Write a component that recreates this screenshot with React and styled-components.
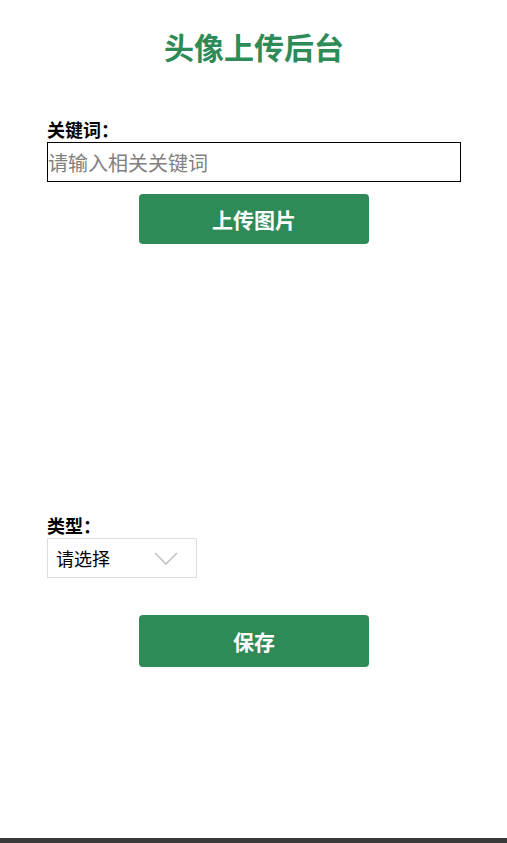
import { createGlobalStyle, styled } from "styled-components";
import { useState } from "react";

const GlobalStyle = createGlobalStyle`
    html, body {
        margin: 0;
        padding: 0;
        background: #ffffff;
    }
    * {
        box-sizing: border-box;
    }
    body {
        font-family: "Noto Sans CJK SC", "Noto Sans", sans-serif;
    }
`

export default function App() {
    const [keyword, setKeyword] = useState("");
    const [tipo, setTipo] = useState("");

    return (
        <Page>
            <GlobalStyle />
            <Main>
                <Title>头像上传后台</Title>

                <Field>
                    <Label>关键词：</Label>
                    <KeywordInput
                        value={keyword}
                        onChange={e => setKeyword(e.target.value)}
                        placeholder="请输入相关关键词"
                    />
                </Field>

                <ActionButton type="button" $height={50} $top={12}>上传图片</ActionButton>

                <Preview />

                <Field>
                    <Label>类型：</Label>
                    <SelectBox>
                        <select value={tipo} onChange={e => setTipo(e.target.value)}>
                            <option value="">请选择</option>
                            <option value="boy">男生头像</option>
                            <option value="girl">女生头像</option>
                            <option value="cartoon">卡通头像</option>
                        </select>
                        <Chevron width="24" height="14" viewBox="0 0 24 14">
                            <path d="M1 1 L12 12 L23 1" fill="none" stroke="#c4c4c4" strokeWidth="1.6" />
                        </Chevron>
                    </SelectBox>
                </Field>

                <ActionButton type="button" $height={52} $top={37}>保存</ActionButton>
            </Main>
            <BottomBar />
        </Page>
    );
}

const Page = styled.div`
    min-height: 100vh;
    display: flex;
    flex-direction: column;
`

const Main = styled.div`
    flex: 1;
    display: flex;
    flex-direction: column;
    padding: 26px 46px 0 47px;
`

const Title = styled.h1`
    margin: 0;
    text-align: center;
    color: #2e8b57;
    font-size: 30px;
    line-height: 40px;
    font-weight: 700;
    margin-bottom: 52px;
`

const Field = styled.div`
    display: flex;
    flex-direction: column;
    gap: 2px;
`

const Label = styled.label`
    color: #000000;
    font-size: 18px;
    line-height: 22px;
    font-weight: 700;
`

const KeywordInput = styled.input`
    width: 100%;
    height: 40px;
    border: 1px solid #000000;
    padding: 0;
    font-family: inherit;
    font-size: 20px;
    outline: none;
    color: #000;
    &::placeholder {
        color: #808080;
    }
`

const ActionButton = styled.button`
    align-self: center;
    width: 230px;
    height: ${p => p.$height}px;
    margin-top: ${p => p.$top}px;
    border: none;
    border-radius: 4px;
    background-color: #2e8b57;
    color: #ffffff;
    font-family: inherit;
    font-size: 21px;
    font-weight: 700;
    cursor: pointer;
`

const Preview = styled.div`
    height: 270px;
`

const SelectBox = styled.div`
    position: relative;
    width: 150px;
    height: 40px;
    select {
        appearance: none;
        width: 100%;
        height: 100%;
        border: 1px solid #dddddd;
        border-radius: 0;
        background: #fff;
        padding: 0 0 0 8px;
        font-family: inherit;
        font-size: 18px;
        color: #000;
        outline: none;
    }
`

const Chevron = styled.svg`
    position: absolute;
    left: 107px;
    top: 14px;
    pointer-events: none;
`

const BottomBar = styled.div`
    height: 5px;
    background-color: #3a3a3a;
`
